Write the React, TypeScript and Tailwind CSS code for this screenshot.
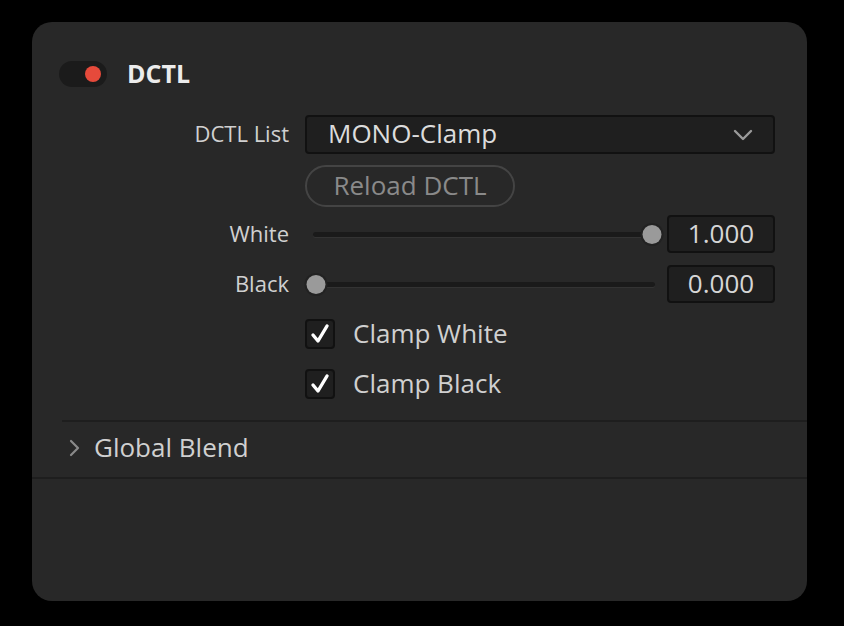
const font = { fontFamily: '"Open Sans", "Noto Sans", sans-serif' };

function Slider({ value }: { value: number }) {
  return (
    <div className="relative h-[38px] flex-1">
      <div className="absolute left-[8px] right-[6px] top-[17px] h-[5px] rounded-full bg-[#1a1a1a] shadow-[0_1px_0_#333]" />
      <div
        className="absolute top-[10px] h-[19px] w-[19px] -translate-x-1/2 rounded-full bg-[#9a9a9a] ring-2 ring-[#222]"
        style={{ left: `${11 + value * 336}px` }}
      />
    </div>
  );
}

function ValueBox({ v }: { v: string }) {
  return (
    <div className="flex h-[38px] w-[108px] items-center justify-center rounded-[4px] border-2 border-[#111] bg-[#1f1f1f] pb-[2px] text-[26px] leading-none text-[#d6d6d6]">
      {v}
    </div>
  );
}

function Check({ label }: { label: string }) {
  return (
    <div className="flex h-[30px] items-center gap-[18px]">
      <div className="flex h-[30px] w-[30px] items-center justify-center rounded-[4px] border-2 border-[#111] bg-[#1f1f1f]">
        <svg width="22" height="22" viewBox="0 0 22 22">
          <path d="M4 12 L9 18 L18 3" fill="none" stroke="#fff" strokeWidth="3.4" strokeLinecap="round" strokeLinejoin="round" />
        </svg>
      </div>
      <span className="mb-[3px] text-[26px] leading-none text-[#d0d0d0]">{label}</span>
    </div>
  );
}

export default function App() {
  return (
    <div className="min-h-[626px] w-[844px] bg-black pl-[32px] pt-[22px]" style={font}>
      <div className="h-[579px] w-[775px] overflow-hidden rounded-[20px] bg-[#282828]">
        <div className="flex h-[26px] items-center pl-[27px] mt-[39px]">
          <div className="flex h-[26px] w-[48px] items-center justify-end rounded-full bg-[#1b1b1b] pr-[6px]">
            <div className="h-[16px] w-[16px] rounded-full bg-[#e64a3b]" />
          </div>
          <span className="ml-[20px] mb-[2px] text-[25px] leading-none font-bold text-[#ececec]">DCTL</span>
        </div>

        <div className="mt-[28px] grid grid-cols-[257px_470px] gap-x-[16px]">
          <div className="flex h-[39px] items-center justify-end pb-[3px] text-[22px] leading-none text-[#d0d0d0]">DCTL List</div>
          <div className="flex h-[39px] items-center justify-between rounded-[4px] border-2 border-[#111] bg-[#1f1f1f] pl-[21px] pr-[20px]">
            <span className="mb-[4px] text-[26px] leading-none text-[#dcdcdc]">MONO-Clamp</span>
            <svg width="20" height="14" viewBox="0 0 20 14">
              <path d="M2 3 L10 11 L18 3" fill="none" stroke="#9a9a9a" strokeWidth="2.4" strokeLinecap="round" strokeLinejoin="round" />
            </svg>
          </div>

          <div />
          <div className="mt-[11px]">
            <div className="flex h-[42px] w-[210px] items-center justify-center rounded-full border-2 border-[#444] pb-[3px] text-[26px] leading-none text-[#8a8a8a]">
              Reload DCTL
            </div>
          </div>

          <div className="mt-[8px] flex h-[38px] items-center justify-end pb-[2px] text-[22px] leading-none text-[#d0d0d0]">White</div>
          <div className="mt-[8px] flex items-center gap-[6px]">
            <Slider value={1} />
            <ValueBox v="1.000" />
          </div>

          <div className="mt-[12px] flex h-[38px] items-center justify-end pb-[2px] text-[22px] leading-none text-[#d0d0d0]">Black</div>
          <div className="mt-[12px] flex items-center gap-[6px]">
            <Slider value={0} />
            <ValueBox v="0.000" />
          </div>

          <div />
          <div className="mt-[16px]">
            <Check label="Clamp White" />
          </div>

          <div />
          <div className="mt-[20px]">
            <Check label="Clamp Black" />
          </div>
        </div>

        <div className="ml-[30px] mt-[21px] h-[2px] bg-[#1e1e1e]" />
        <div className="flex h-[55px] items-center pl-[37px]">
          <svg width="12" height="18" viewBox="0 0 12 18" className="mb-[4px]">
            <path d="M2 2 L9 9 L2 16" fill="none" stroke="#8a8a8a" strokeWidth="2.2" strokeLinecap="round" strokeLinejoin="round" />
          </svg>
          <span className="ml-[13px] mb-[6px] text-[26px] leading-none text-[#d0d0d0]">Global Blend</span>
        </div>
        <div className="h-[2px] bg-[#1e1e1e]" />
      </div>
    </div>
  );
}
